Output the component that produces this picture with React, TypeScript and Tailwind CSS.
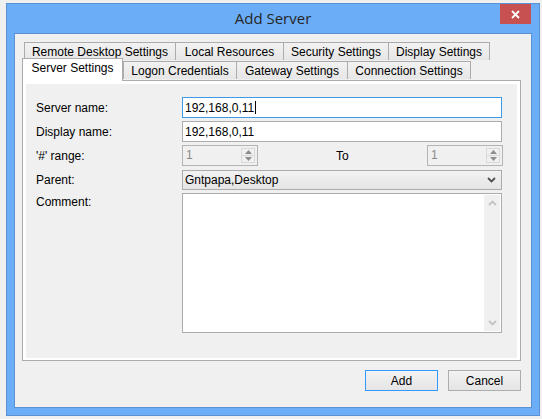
import type { ReactNode } from "react";

const font = { fontFamily: '"Liberation Sans", "DejaVu Sans", sans-serif' };

const backTabs = [
  { label: "Remote Desktop Settings", w: "w-[152px]" },
  { label: "Local Resources", w: "w-[109px]" },
  { label: "Security Settings", w: "w-[106px]" },
  { label: "Display Settings", w: "w-[102px]" },
];

const frontTabs = [
  { label: "Logon Credentials", w: "w-[114px]" },
  { label: "Gateway Settings", w: "w-[112px]" },
  { label: "Connection Settings", w: "w-[124px]" },
];

function Tab({ label, w }: { label: string; w: string }) {
  return (
    <div
      className={`${w} -ml-px flex h-[18px] items-center justify-center border border-b-0 border-[#acacac] bg-gradient-to-b from-[#f2f2f2] to-[#e6e6e6] text-[12px] leading-none text-black first:ml-0`}
    >
      {label}
    </div>
  );
}

function Row({ label, children }: { label: string; children: ReactNode }) {
  return (
    <div className="flex h-[21px] items-center">
      <span className="w-[146px] shrink-0 text-[12px] text-black">{label}</span>
      {children}
    </div>
  );
}

function Spinner() {
  return (
    <div className="flex h-[21px] w-[76px] items-stretch border border-[#b4b4b4] bg-[#f0f0f0] p-[2px]">
      <span className="flex-1 pl-[1px] text-[12px] leading-[15px] text-[#8a8a8a]">1</span>
      <div className="flex w-[14px] flex-col border border-[#d9d9d9]">
        <div className="flex flex-1 items-center justify-center border-b border-[#d9d9d9]">
          <svg width="7" height="4" viewBox="0 0 7 4">
            <path d="M0 4 L3.5 0 L7 4 Z" fill="#8c8c8c" />
          </svg>
        </div>
        <div className="flex flex-1 items-center justify-center">
          <svg width="7" height="4" viewBox="0 0 7 4">
            <path d="M0 0 L3.5 4 L7 0 Z" fill="#8c8c8c" />
          </svg>
        </div>
      </div>
    </div>
  );
}

function Chevron({ up, color }: { up?: boolean; color: string }) {
  return (
    <svg width="9" height="6" viewBox="0 0 9 6">
      <path
        d={up ? "M1 5 L4.5 1.5 L8 5" : "M1 1 L4.5 4.5 L8 1"}
        fill="none"
        stroke={color}
        strokeWidth="1.8"
      />
    </svg>
  );
}

export default function App() {
  return (
    <div className="h-[419px] w-[542px] overflow-hidden bg-[#f0f0f0] pl-[6px] pt-[3px]" style={font}>
      <div className="flex h-[413px] w-[534px] flex-col border border-[#5a90d4] bg-[#6badf6] px-[7px] pb-[7px]">
        <div className="relative flex h-[29px] shrink-0 items-center justify-center">
          <span
            className="text-[15px] text-[#262626]"
            style={{ fontFamily: '"Open Sans", "Noto Sans", sans-serif' }}
          >
            Add Server
          </span>
          <div className="absolute right-[1px] top-0 flex h-[20px] w-[31px] items-center justify-center bg-[#c75050]">
            <svg width="9" height="9" viewBox="0 0 9 9">
              <path d="M1 1 L8 8 M8 1 L1 8" stroke="#fff" strokeWidth="1.8" />
            </svg>
          </div>
        </div>
        <div className="flex flex-1 flex-col border border-[#5a90d4] bg-[#f0f0f0] pl-[7px] pr-[10px] pt-[8px]">
          <div className="flex pl-[2px]">
            {backTabs.map((t) => (
              <Tab key={t.label} {...t} />
            ))}
          </div>
          <div className="-mt-[2px] flex">
            <div className="relative z-10 flex h-[23px] w-[101px] items-start justify-center border border-b-0 border-[#acacac] bg-white pt-[3px] text-[12px] leading-none text-black">
              Server Settings
            </div>
            <div className="mt-[3px] flex">
              {frontTabs.map((t) => (
                <Tab key={t.label} {...t} />
              ))}
            </div>
          </div>
          <div className="-mt-px h-[281px] border border-[#acacac]">
            <div className="flex h-full flex-col gap-[3px] border-[3px] border-b-2 border-white bg-[#f0f0f0] pl-[10px] pr-[14px] pt-[13px]">
              <Row label="Server name:">
                <div className="flex h-[21px] w-[320px] items-center border border-[#3c9ae8] bg-white pl-[2px] text-[12px] text-black">
                  192,168,0,11<span className="ml-[1px] inline-block h-[13px] w-px bg-black" />
                </div>
              </Row>
              <Row label="Display name:">
                <div className="flex h-[21px] w-[320px] items-center border border-[#adadad] bg-white pl-[2px] text-[12px] text-black">
                  192,168,0,11
                </div>
              </Row>
              <Row label="'#' range:">
                <Spinner />
                <span className="ml-[78px] text-[12px] text-black">To</span>
                <div className="ml-auto">
                  <Spinner />
                </div>
              </Row>
              <div className="flex h-[21px] items-center">
                <span className="w-[146px] shrink-0 text-[12px] text-black">Parent:</span>
                <div className="flex h-[20px] w-[320px] items-center justify-between border border-[#acacac] bg-gradient-to-b from-[#f2f2f2] to-[#e5e5e5] pl-[2px] pr-[5px] text-[12px] text-black">
                  Gntpapa,Desktop
                  <Chevron color="#505050" />
                </div>
              </div>
              <div className="flex">
                <span className="w-[146px] shrink-0 pt-[2px] text-[12px] leading-[14px] text-black">Comment:</span>
                <div className="flex h-[140px] w-[320px] justify-end border border-[#acacac] bg-white p-[1px]">
                  <div className="flex w-[16px] flex-col items-center justify-between bg-[#f0f0f0] py-[5px]">
                    <Chevron up color="#c4c4c4" />
                    <Chevron color="#c4c4c4" />
                  </div>
                </div>
              </div>
            </div>
          </div>
          <div className="mt-[9px] flex justify-end gap-[10px]">
            <div className="flex h-[21px] w-[73px] items-center justify-center border border-[#3399ff] bg-gradient-to-b from-[#f2f2f2] to-[#e5e5e5] text-[12px] text-black">
              Add
            </div>
            <div className="flex h-[21px] w-[73px] items-center justify-center border border-[#adadad] bg-gradient-to-b from-[#f2f2f2] to-[#e5e5e5] text-[12px] text-black">
              Cancel
            </div>
          </div>
        </div>
      </div>
    </div>
  );
}
